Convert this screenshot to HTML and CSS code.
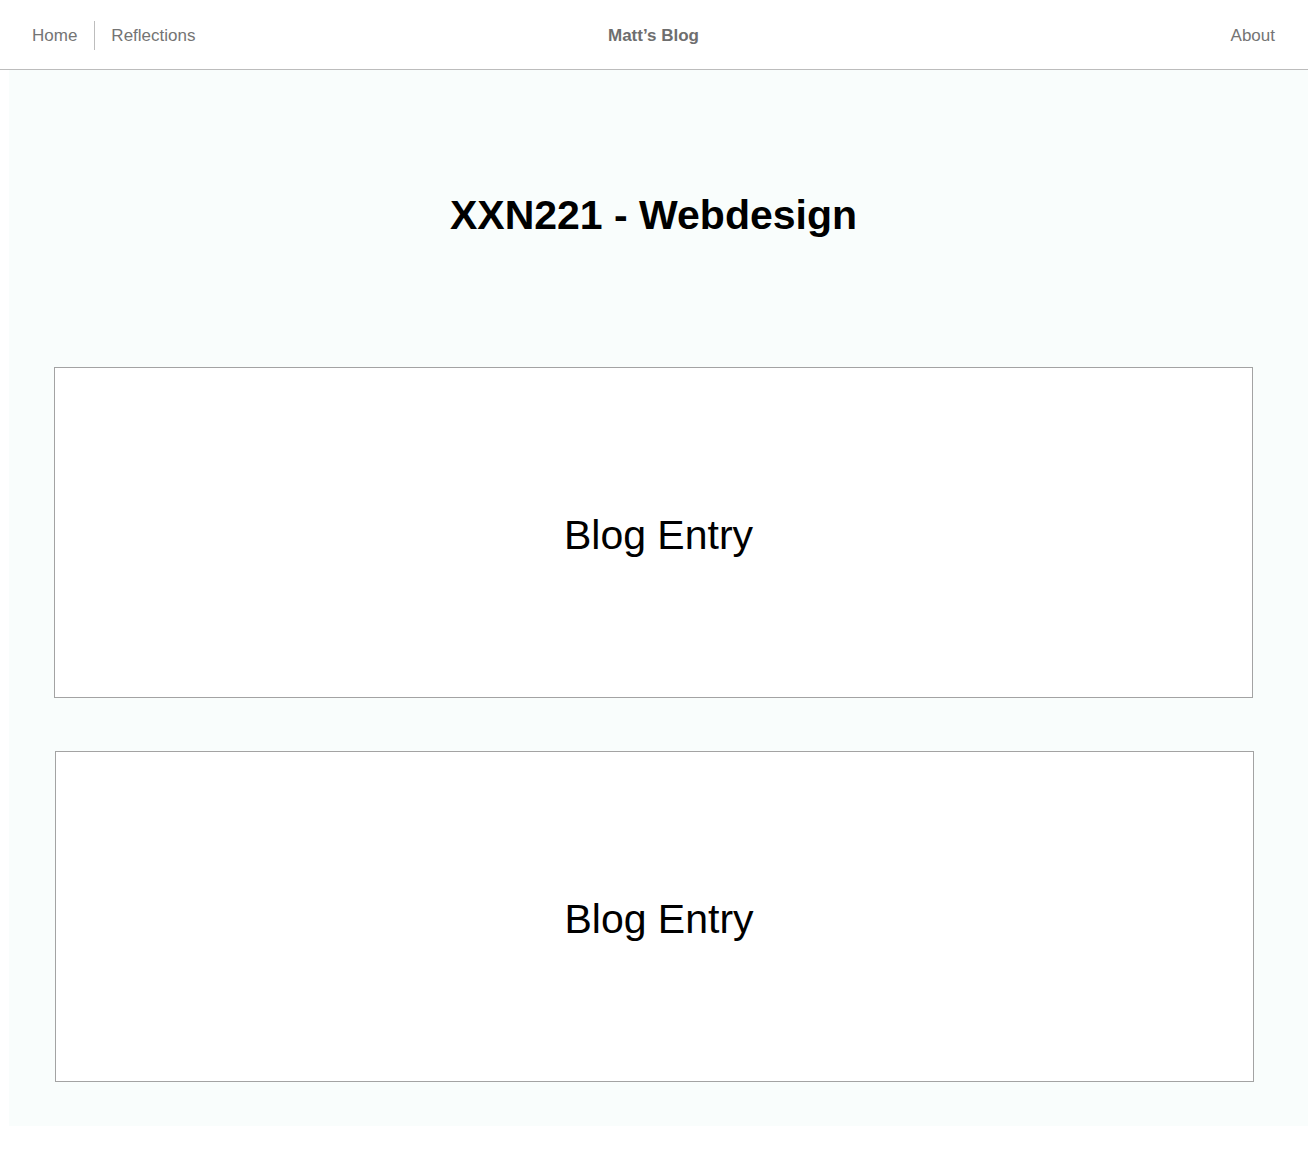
FILE: index.html
```html
<!DOCTYPE html>
<html lang="en">
<head>
<meta charset="utf-8">
<title>Matt's Blog</title>
<link rel="stylesheet" href="styles.css">
</head>
<body>
<header class="topbar">
  <nav class="nav-left">
    <a class="nav-link" href="#">Home</a>
    <span class="nav-sep"></span>
    <a class="nav-link" href="#">Reflections</a>
  </nav>
  <div class="brand">Matt’s Blog</div>
  <nav class="nav-right">
    <a class="nav-link" href="#">About</a>
  </nav>
</header>
<main class="content">
  <h1 class="page-title">XXN221 - Webdesign</h1>
  <section class="entries">
    <article class="entry">Blog Entry</article>
    <article class="entry entry-shift">Blog Entry</article>
  </section>
</main>
</body>
</html>
```

FILE: styles.css
```css
* { box-sizing: border-box; }
html, body { margin: 0; padding: 0; background: #ffffff; }
body {
  font-family: "Liberation Sans", Arial, Helvetica, sans-serif;
  color: #000;
}
.topbar {
  height: 70px;
  border-bottom: 1px solid #bcbcbc;
  display: grid;
  grid-template-columns: 1fr auto 1fr;
  align-items: center;
  padding: 2px 33px 0 32px;
  background: #fff;
}
.nav-left {
  display: flex;
  align-items: center;
}
.nav-right {
  display: flex;
  justify-content: flex-end;
}
.nav-link {
  font-size: 17px;
  color: #747474;
  text-decoration: none;
}
.nav-sep {
  width: 1px;
  height: 29px;
  background: #bdbdbd;
  margin: -1px 16px 0 17px;
}
.brand {
  font-size: 17px;
  font-weight: bold;
  color: #6e6e6e;
}
.content {
  margin-left: 9px;
  background: #f9fdfc;
  padding: 121px 0 44px 0;
}
.page-title {
  margin: 0 0 0 -10px;
  text-align: center;
  font-size: 41px;
  line-height: 48px;
  font-weight: bold;
}
.entries {
  margin-top: 128px;
  display: flex;
  flex-direction: column;
  gap: 53px;
  padding-left: 45px;
}
.entry {
  width: 1199px;
  height: 331px;
  background: #fff;
  border: 1px solid #a3a3a3;
  display: flex;
  align-items: center;
  justify-content: center;
  font-size: 41px;
  padding: 6px 0 0 10px;
}
.entry-shift {
  margin-left: 1px;
  padding-left: 9px;
}
```
